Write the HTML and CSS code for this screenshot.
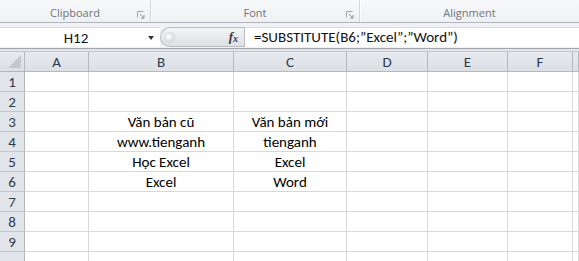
FILE: index.html
```html
<!DOCTYPE html>
<html lang="vi">
<head>
    <meta charset="UTF-8">
    <title>SUBSTITUTE</title>
    <link rel="stylesheet" href="styles.css">
</head>
<body>
    <div class="ribbon">
        <div class="group group-clipboard">
            <span class="group-label">Clipboard</span>
            <svg class="launcher" width="8" height="8" viewBox="0 0 8 8"><path d="M0.5 6.5V0.5H6.5" fill="none" stroke="#a3a7ac"/><path d="M3 3L7 7M4 7H7V4" fill="none" stroke="#8d9196"/></svg>
        </div>
        <div class="group group-font">
            <span class="group-label">Font</span>
            <svg class="launcher" width="8" height="8" viewBox="0 0 8 8"><path d="M0.5 6.5V0.5H6.5" fill="none" stroke="#a3a7ac"/><path d="M3 3L7 7M4 7H7V4" fill="none" stroke="#8d9196"/></svg>
        </div>
        <div class="group group-align">
            <span class="group-label">Alignment</span>
        </div>
    </div>

    <div class="formula-bar">
        <div class="name-box">
            <span class="name">H12</span>
            <span class="drop"></span>
        </div>
        <div class="fx-area">
            <span class="grip"></span>
            <span class="fx">f<sub>x</sub></span>
        </div>
        <div class="formula">=SUBSTITUTE(B6;”Excel”;”Word”)</div>
    </div>

    <div class="sheet">
        <div class="hd corner"><span class="corner-tri"></span></div>
        <div class="hd">A</div><div class="hd">B</div><div class="hd">C</div><div class="hd">D</div><div class="hd">E</div><div class="hd">F</div><div class="hd"></div>

        <div class="rh">1</div><div class="c"></div><div class="c"></div><div class="c"></div><div class="c"></div><div class="c"></div><div class="c"></div><div class="c"></div>
        <div class="rh">2</div><div class="c"></div><div class="c"></div><div class="c"></div><div class="c"></div><div class="c"></div><div class="c"></div><div class="c"></div>
        <div class="rh">3</div><div class="c"></div><div class="c">Văn bản cũ</div><div class="c">Văn bản mới</div><div class="c"></div><div class="c"></div><div class="c"></div><div class="c"></div>
        <div class="rh">4</div><div class="c"></div><div class="c">www.tienganh</div><div class="c">tienganh</div><div class="c"></div><div class="c"></div><div class="c"></div><div class="c"></div>
        <div class="rh">5</div><div class="c"></div><div class="c">Học Excel</div><div class="c">Excel</div><div class="c"></div><div class="c"></div><div class="c"></div><div class="c"></div>
        <div class="rh">6</div><div class="c"></div><div class="c">Excel</div><div class="c">Word</div><div class="c"></div><div class="c"></div><div class="c"></div><div class="c"></div>
        <div class="rh">7</div><div class="c"></div><div class="c"></div><div class="c"></div><div class="c"></div><div class="c"></div><div class="c"></div><div class="c"></div>
        <div class="rh">8</div><div class="c"></div><div class="c"></div><div class="c"></div><div class="c"></div><div class="c"></div><div class="c"></div><div class="c"></div>
        <div class="rh">9</div><div class="c"></div><div class="c"></div><div class="c"></div><div class="c"></div><div class="c"></div><div class="c"></div><div class="c"></div>
        <div class="rh"></div><div class="c"></div><div class="c"></div><div class="c"></div><div class="c"></div><div class="c"></div><div class="c"></div><div class="c"></div>
    </div>
</body>
</html>
```

FILE: styles.css
```css
body {
    margin: 0;
    width: 579px;
    height: 261px;
    overflow: hidden;
    background-color: #fff;
    font-family: 'Carlito', 'Lato', sans-serif;
}
.ribbon {
    display: flex;
    height: 22px;
    background: linear-gradient(#f8f9fa, #eef0f3);
    border-bottom: 1px solid #b1b5ba;
}
.group {
    position: relative;
    display: flex;
    justify-content: center;
    align-items: center;
    border-right: 1px solid #d3d6da;
    box-shadow: 1px 0 0 #fbfcfd;
}
.group-clipboard {
    width: 150px;
}
.group-font {
    width: 208px;
}
.group-align {
    flex: 1;
    border-right: none;
    box-shadow: none;
}
.group-label {
    font-family: 'Open Sans', sans-serif;
    font-size: 11px;
    color: #6e747b;
    padding-top: 2px;
}
.launcher {
    position: absolute;
    right: 5px;
    top: 11px;
}
.formula-bar {
    display: flex;
    height: 20px;
    padding: 4px 0 1px;
    background-color: #eff1f4;
    border-bottom: 1px solid #a2a6ab;
    margin-bottom: 2px;
    box-shadow: 0 2px 0 #e2e5e9;
}
.name-box {
    width: 160px;
    background-color: #fff;
    display: flex;
    align-items: center;
    border-top: 1px solid #d8dbdf;
}
.name {
    flex: 1;
    text-align: center;
    font-size: 15px;
    color: #111;
    padding-left: 4px;
}
.drop {
    width: 0;
    height: 0;
    border-left: 3px solid transparent;
    border-right: 3px solid transparent;
    border-top: 4px solid #333;
    margin-right: 6px;
}
.fx-area {
    width: 84px;
    display: flex;
    align-items: center;
    justify-content: space-between;
    box-sizing: border-box;
    background: linear-gradient(#f3f4f6, #dde0e4);
    border: 1px solid #b9bdc2;
    border-right: none;
    border-radius: 10px 0 0 10px;
    padding: 0 6px 0 3px;
}
.grip {
    width: 9px;
    height: 9px;
    border-radius: 50%;
    background: radial-gradient(circle at 40% 35%, #ffffff, #c9cdd2);
    border: 1px solid #d4d7db;
}
.fx {
    font-family: 'Liberation Serif', serif;
    font-style: italic;
    font-weight: bold;
    font-size: 13px;
    color: #3a3a3a;
}
.fx sub {
    font-size: 10px;
    vertical-align: -1px;
}
.formula {
    flex: 1;
    background-color: #fff;
    border-left: 1px solid #b9bdc2;
    border-top: 1px solid #d8dbdf;
    font-size: 15px;
    color: #111;
    padding-left: 9px;
    line-height: 19px;
}
.sheet {
    display: grid;
    grid-template-columns: 25px 64px 145px 113px 81px 80px 65px 1fr;
    grid-template-rows: 21px repeat(10, 20px);
}
.hd {
    background: linear-gradient(#e6e9ed, #dcdfe4);
    border-right: 1px solid #b3b8bd;
    border-bottom: 1px solid #b3b8bd;
    border-top: 1px solid #c5c9ce;
    box-sizing: border-box;
    display: flex;
    align-items: center;
    justify-content: center;
    font-size: 15px;
    color: #2f3b4a;
}
.corner {
    position: relative;
}
.corner-tri {
    position: absolute;
    right: 3px;
    bottom: 3px;
    width: 0;
    height: 0;
    border-left: 13px solid transparent;
    border-bottom: 13px solid #c4c8cd;
}
.rh {
    background: #e1e4e8;
    border-right: 1px solid #b3b8bd;
    border-bottom: 1px solid #c3c7cc;
    box-sizing: border-box;
    display: flex;
    align-items: center;
    justify-content: center;
    font-size: 15px;
    color: #2f3b4a;
}
.c {
    border-right: 1px solid #d8d8d8;
    border-bottom: 1px solid #d8d8d8;
    box-sizing: border-box;
    display: flex;
    align-items: center;
    justify-content: center;
    font-size: 15px;
    color: #000;
    white-space: nowrap;
}
```
